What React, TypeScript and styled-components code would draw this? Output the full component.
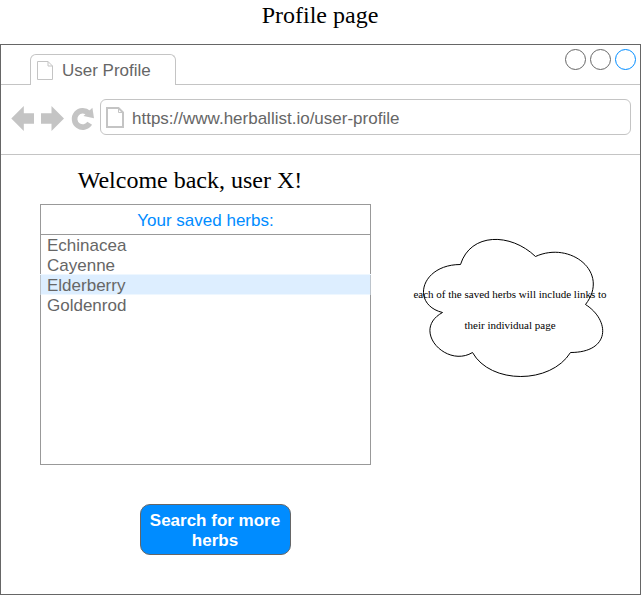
import React from "react";
import styled, { createGlobalStyle } from "styled-components";

const sans = `"Liberation Sans", Arial, Helvetica, sans-serif`;
const serif = `"Liberation Serif", "Times New Roman", serif`;

const GlobalStyle = createGlobalStyle`
  * { box-sizing: border-box; }
  body { margin: 0; background: #fff; }
`;

const Page = styled.div`
  display: flex;
  flex-direction: column;
  width: 641px;
  height: 595px;
  overflow: hidden;
`;

const Title = styled.h1`
  margin: 0;
  height: 44px;
  padding: 1px 1px 0 0;
  font: 400 24px/28px ${serif};
  text-align: center;
  color: #000;
`;

const BrowserWindow = styled.main`
  display: flex;
  flex-direction: column;
  flex: 1;
  border: 1px solid #666;
`;

const TabBar = styled.div`
  display: flex;
  height: 40px;
`;

const TabGap = styled.div`
  width: 29px;
  border-bottom: 1px solid #c4c4c4;
`;

const Tab = styled.div`
  display: flex;
  align-items: center;
  gap: 9px;
  width: 146px;
  height: 31px;
  margin-top: 9px;
  padding: 1px 0 0 6px;
  border: 1px solid #c4c4c4;
  border-bottom: 0;
  border-radius: 6px 6px 0 0;
  font: 17px/20px ${sans};
  color: #666;
`;

const WindowControls = styled.div`
  display: flex;
  flex: 1;
  justify-content: flex-end;
  gap: 4px;
  padding: 4px 4px 0 0;
  border-bottom: 1px solid #c4c4c4;
`;

const Control = styled.span<{ $color: string }>`
  width: 21px;
  height: 21px;
  border: 1px solid ${(p) => p.$color};
  border-radius: 50%;
`;

const Toolbar = styled.div`
  display: flex;
  height: 70px;
  padding: 14px 9px 0 10px;
  border-bottom: 1px solid #c4c4c4;
`;

const NavIcons = styled.svg`
  width: 89px;
  height: 36px;
  flex: none;
`;

const AddressBar = styled.div`
  display: flex;
  align-items: flex-start;
  flex: 1;
  height: 36px;
  padding: 7px 0 0 5px;
  gap: 8px;
  border: 1px solid #c4c4c4;
  border-radius: 6px;
`;

const Url = styled.span`
  margin-top: 2px;
  font: 17px/20px ${sans};
  color: #666;
`;

const Content = styled.div`
  display: grid;
  grid-template-columns: 369px 1fr;
  flex: 1;
`;

const ProfileColumn = styled.section`
  display: flex;
  flex-direction: column;
  padding-left: 39px;
`;

const Welcome = styled.h2`
  width: 300px;
  margin: 0;
  padding-top: 11px;
  height: 49px;
  font: 400 24px/28px ${serif};
  text-align: center;
  color: #000;
`;

const HerbPanel = styled.div`
  width: 331px;
  height: 261px;
  border: 1px solid #999;
`;

const PanelHeader = styled.div`
  height: 30px;
  padding-top: 6px;
  border-bottom: 1px solid #999;
  font: 17px/20px ${sans};
  text-align: center;
  color: #008cff;
`;

const HerbList = styled.ul`
  margin: 0;
  padding: 0;
  list-style: none;
`;

const Herb = styled.li<{ $selected?: boolean }>`
  height: 20px;
  margin: 0 -1px;
  padding-left: 6px;
  border: solid transparent;
  border-width: 0 1px;
  font: 17px/21px ${sans};
  color: #666;
  ${(p) =>
    p.$selected &&
    `
    border-color: #bcc4cc;
    background: linear-gradient(#ddeeff 19px, #eef7ff 19px);
    box-shadow: 0 -1px #eef7ff;
  `}
`;

const SearchButton = styled.button`
  width: 151px;
  height: 51px;
  margin: 39px 0 0 100px;
  padding: 2px 1px 0 0;
  border: 1px solid #666;
  border-radius: 10px;
  background: #008cff;
  color: #fff;
  font: 700 17px/20px ${sans};
`;

const Note = styled.aside`
  display: grid;
  width: 200px;
  height: 160px;
  margin: 69px 0 0 40px;
  > * { grid-area: 1 / 1; }
`;

const Cloud = styled.svg`
  width: 201px;
  height: 161px;
`;

const NoteText = styled.p`
  margin: 55px -10px 0 -11px;
  font: 11px/31px ${serif};
  text-align: center;
  color: #000;
`;

const PageIcon = ({ w, h, stroke }: { w: number; h: number; stroke: number }) => {
  const o = stroke / 2;
  const fold = 4.5;
  return (
    <svg width={w} height={h} fill="none" stroke="#c4c4c4" strokeWidth={stroke}>
      <path d={`M${o} ${o}H${w - o - fold}L${w - o} ${o + fold}V${h - o}H${o}Z`} />
      <path strokeWidth={1} d={`M${w - o - fold} ${o}V${o + fold}H${w - o}`} />
    </svg>
  );
};

const herbs = ["Echinacea", "Cayenne", "Elderberry", "Goldenrod"];

export default function App() {
  return (
    <Page>
      <GlobalStyle />
      <Title>Profile page</Title>
      <BrowserWindow>
        <TabBar>
          <TabGap />
          <Tab>
            <PageIcon w={16} h={19} stroke={1} />
            User Profile
          </Tab>
          <WindowControls>
            <Control $color="#666" />
            <Control $color="#666" />
            <Control $color="#008cff" />
          </WindowControls>
        </TabBar>
        <Toolbar>
          <NavIcons viewBox="11 99 89 36" fill="#c4c4c4">
            <path d="M11.300 118.500L23.800 106V113.300H34V123.700H23.800V131Z" />
            <path d="M64 118.500L51.500 106V113.300H41V123.700H51.500V131Z" />
            <path
              d="M89.700 123.300A8.200 8.200 0 1 1 88.500 113"
              fill="none"
              stroke="#c4c4c4"
              strokeWidth="5.600"
            />
            <path d="M92.400 107.800L94 118.300L83.500 116Z" />
          </NavIcons>
          <AddressBar>
            <PageIcon w={18} h={21} stroke={2} />
            <Url>https://www.herballist.io/user-profile</Url>
          </AddressBar>
        </Toolbar>
        <Content>
          <ProfileColumn>
            <Welcome>Welcome back, user X!</Welcome>
            <HerbPanel>
              <PanelHeader>Your saved herbs:</PanelHeader>
              <HerbList>
                {herbs.map((herb) => (
                  <Herb key={herb} $selected={herb === "Elderberry"}>
                    {herb}
                  </Herb>
                ))}
              </HerbList>
            </HerbPanel>
            <SearchButton>
              Search for more
              <br />
              herbs
            </SearchButton>
          </ProfileColumn>
          <Note>
            <Cloud viewBox="-0.500 -0.500 201 161" fill="none" stroke="#000">
              <path d="M50 40C10 40 0 80 32 88C0 105.600 36 144 62 128C80 160 140 160 160 128C200 128 200 96 175 80C200 48 160 16 125 32C100 8 60 8 50 40Z" />
            </Cloud>
            <NoteText>
              each of the saved herbs will include links to
              <br />
              their individual page
            </NoteText>
          </Note>
        </Content>
      </BrowserWindow>
    </Page>
  );
}
